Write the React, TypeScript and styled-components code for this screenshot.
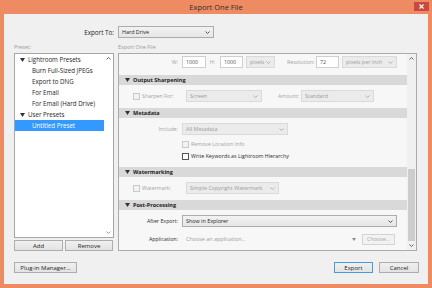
import React from 'react'
import styled, { createGlobalStyle } from 'styled-components'

const GlobalStyle = createGlobalStyle`
  html, body {
    margin: 0;
    padding: 0;
  }
  body {
    width: 432px;
    height: 288px;
    overflow: hidden;
    font-family: 'Open Sans', 'Noto Sans', sans-serif;
    -webkit-font-smoothing: antialiased;
  }
`

const Window = styled.div`
  width: 432px;
  height: 288px;
  box-sizing: border-box;
  background: #ee8b62;
  padding: 0 4px 4px 4px;
  display: flex;
  flex-direction: column;
`

const TitleBar = styled.div`
  height: 14px;
  flex-shrink: 0;
  display: grid;
  grid-template-columns: 1fr auto 1fr;
  align-items: start;
`

const Title = styled.div`
  grid-column: 2;
  font-size: 7.5px;
  line-height: 14px;
  color: #2d2d2d;
`

const CloseButton = styled.div`
  grid-column: 3;
  justify-self: end;
  width: 15px;
  height: 9px;
  margin-top: 2px;
  margin-right: -1px;
  background: #c9493f;
  display: flex;
  align-items: center;
  justify-content: center;
`

const Body = styled.div`
  flex: 1;
  min-height: 0;
  background: #f0f0f0;
  padding: 12px 9px 11px 10px;
  display: flex;
  flex-direction: column;
`

const ExportToRow = styled.div`
  height: 12px;
  display: flex;
  align-items: center;
  padding-left: 70px;
`

const ExportToLabel = styled.div`
  width: 30px;
  margin-right: 4px;
  text-align: right;
  font-size: 6.3px;
  color: #1e1e1e;
  white-space: nowrap;
`

const Columns = styled.div`
  flex: 1;
  min-height: 0;
  margin-top: 4px;
  margin-right: 2px;
  display: grid;
  grid-template-columns: 100px 1fr;
  column-gap: 4px;
`

const Column = styled.div`
  display: flex;
  flex-direction: column;
  min-height: 0;
`

const ColumnTitle = styled.div`
  height: 11px;
  line-height: 11px;
  font-size: 5.3px;
  color: #9b9b9b;
`

const PresetList = styled.div`
  flex: 1;
  min-height: 0;
  border: 1px solid #a6a6a6;
  background: #ffffff;
  display: flex;
`

const TreeItems = styled.div`
  flex: 1;
  display: flex;
  flex-direction: column;
`

const TreeRow = styled.div<{ $level: number; $selected?: boolean }>`
  height: 11px;
  display: flex;
  align-items: center;
  gap: 3px;
  padding-left: ${({ $level }) => ($level === 0 ? 5 : 17)}px;
  background: ${({ $selected }) => ($selected ? '#3399ff' : 'transparent')};
  color: ${({ $selected }) => ($selected ? '#ffffff' : '#1e1e1e')};
  font-size: 6.2px;
  white-space: nowrap;
`

const ListScrollBar = styled.div`
  width: 9px;
  display: flex;
  flex-direction: column;
  justify-content: space-between;
  align-items: center;
  padding: 3px 0;
`

const ListButtons = styled.div`
  height: 11px;
  margin-top: 2px;
  display: grid;
  grid-template-columns: 49px 48px;
  column-gap: 2px;
`

const Button = styled.div<{ $w?: number; $ml?: number; $default?: boolean; $disabled?: boolean }>`
  box-sizing: border-box;
  height: 11px;
  width: ${({ $w }) => ($w ? `${$w}px` : 'auto')};
  margin-left: ${({ $ml }) => $ml ?? 0}px;
  border: 1px solid ${({ $default }) => ($default ? '#3c8fe0' : '#adadad')};
  background: ${({ $disabled }) => ($disabled ? '#f2f2f2' : 'linear-gradient(#f0f0f0, #e3e3e3)')};
  border-color: ${({ $default, $disabled }) => ($default ? '#4a97e2' : $disabled ? '#d4d4d4' : '#adadad')};
  display: flex;
  align-items: center;
  justify-content: center;
  font-size: ${({ $disabled }) => ($disabled ? 5.4 : 6)}px;
  color: ${({ $disabled }) => ($disabled ? '#a8a8a8' : '#1e1e1e')};
  white-space: nowrap;
`

const SettingsPanel = styled.div`
  flex: 1;
  min-height: 0;
  border: 1px solid #ababab;
  background: #f7f7f7;
  display: flex;
`

const PanelContent = styled.div`
  flex: 1;
  display: flex;
  flex-direction: column;
  overflow: hidden;
`

const PanelScrollBar = styled.div`
  width: 9px;
  background: #f0f0f0;
  display: flex;
  flex-direction: column;
`

const ScrollArrow = styled.div`
  height: 9px;
  display: flex;
  align-items: center;
  justify-content: center;
`

const ScrollTrack = styled.div`
  flex: 1;
  display: flex;
  flex-direction: column;
  justify-content: flex-end;
`

const ScrollThumb = styled.div<{ $h: number }>`
  height: ${({ $h }) => $h}px;
  background: #cdcdcd;
  margin: 0 1px;
`

const SectionHeader = styled.div`
  height: 10px;
  flex-shrink: 0;
  background: #d9d9d9;
  display: flex;
  align-items: center;
  gap: 3px;
  padding-left: 6px;
  font-size: 5.5px;
  font-weight: 700;
  color: #222;
`

const SectionBody = styled.div<{ $pt: number; $pb: number }>`
  display: flex;
  flex-direction: column;
  padding: ${({ $pt, $pb }) => `${$pt}px 0 ${$pb}px`};
`

const FormRow = styled.div<{ $mt?: number }>`
  height: 12px;
  flex-shrink: 0;
  display: flex;
  align-items: center;
  margin-top: ${({ $mt }) => $mt ?? 0}px;
`

const RowLabel = styled.div<{ $dim?: boolean }>`
  width: 59px;
  margin-right: 4px;
  text-align: right;
  font-size: 5.3px;
  color: ${({ $dim }) => ($dim ? '#a3a3a3' : '#2a2a2a')};
  white-space: nowrap;
`

const CheckLabel = styled.label<{ $dim?: boolean }>`
  width: 49px;
  margin-right: 4px;
  padding-left: 14px;
  display: flex;
  align-items: center;
  gap: 2px;
  font-size: 5.3px;
  color: ${({ $dim }) => ($dim ? '#a3a3a3' : '#2a2a2a')};
  white-space: nowrap;
`

const CheckRow = styled.label<{ $dim?: boolean }>`
  height: 12px;
  padding-left: 63px;
  display: flex;
  align-items: center;
  gap: 2px;
  font-size: 5.3px;
  color: ${({ $dim }) => ($dim ? '#a3a3a3' : '#2a2a2a')};
  white-space: nowrap;
`

const CheckBox = styled.span<{ $dim?: boolean }>`
  box-sizing: border-box;
  width: 7px;
  height: 7px;
  flex-shrink: 0;
  border: 1px solid ${({ $dim }) => ($dim ? '#c9c9c9' : '#555')};
  background: ${({ $dim }) => ($dim ? '#f2f2f2' : '#fff')};
`

const InlineLabel = styled.div<{ $w: number; $ml: number; $mr: number }>`
  width: ${({ $w }) => $w}px;
  margin: ${({ $ml, $mr }) => `0 ${$mr}px 0 ${$ml}px`};
  text-align: right;
  font-size: 5.3px;
  color: #a3a3a3;
  white-space: nowrap;
`

const TextInput = styled.div<{ $w: number; $ml?: number }>`
  box-sizing: border-box;
  width: ${({ $w }) => $w}px;
  height: 12px;
  margin-left: ${({ $ml }) => $ml ?? 0}px;
  border: 1px solid #cfcfcf;
  background: #fff;
  padding-left: 3px;
  display: flex;
  align-items: center;
  font-size: 5.3px;
  color: #555;
`

const SelectBox = styled.div<{ $w: number; $ml?: number; $dim?: boolean; $flat?: boolean }>`
  box-sizing: border-box;
  width: ${({ $w }) => $w}px;
  height: 12px;
  margin-left: ${({ $ml }) => $ml ?? 0}px;
  border: 1px solid ${({ $dim, $flat }) => ($flat ? 'transparent' : $dim ? '#dadada' : '#acacac')};
  background: ${({ $dim, $flat }) => ($flat ? 'transparent' : $dim ? '#ebebeb' : 'linear-gradient(#f2f2f2, #e6e6e6)')};
  padding: 0 3px;
  display: flex;
  align-items: center;
  justify-content: space-between;
  font-size: 5.4px;
  color: ${({ $dim }) => ($dim ? '#9c9c9c' : '#1e1e1e')};
  white-space: nowrap;
`

const Footer = styled.div`
  height: 11px;
  margin-top: 11px;
  display: flex;
  align-items: center;
  justify-content: space-between;
`

const FooterActions = styled.div`
  display: flex;
  gap: 6px;
`

function Chevron({ color = '#6d6d6d', filled = false }: { color?: string; filled?: boolean }) {
  if (filled) {
    return (
      <svg width="4" height="3" viewBox="0 0 4 3">
        <polygon points="0,0 4,0 2,3" fill={color} />
      </svg>
    )
  }
  return (
    <svg width="5" height="3" viewBox="0 0 5 3">
      <polyline points="0.5,0.5 2.5,2.5 4.5,0.5" fill="none" stroke={color} strokeWidth="1" />
    </svg>
  )
}

function UpChevron() {
  return (
    <svg width="5" height="3" viewBox="0 0 5 3">
      <polyline points="0.5,2.5 2.5,0.5 4.5,2.5" fill="none" stroke="#606060" strokeWidth="1" />
    </svg>
  )
}

function Twisty({ color = '#333' }: { color?: string }) {
  return (
    <svg width="5" height="4" viewBox="0 0 5 4">
      <polygon points="0,0 5,0 2.5,4" fill={color} />
    </svg>
  )
}

function Select({
  value,
  w,
  ml,
  dim,
  flat,
}: {
  value: string
  w: number
  ml?: number
  dim?: boolean
  flat?: boolean
}) {
  return (
    <SelectBox $w={w} $ml={ml} $dim={dim} $flat={flat}>
      <span>{value}</span>
      {flat ? <Chevron filled color="#8a8a8a" /> : <Chevron color={dim ? '#b0b0b0' : '#555'} />}
    </SelectBox>
  )
}

function Section({ title, children }: { title: string; children: React.ReactNode }) {
  return (
    <>
      <SectionHeader>
        <Twisty />
        {title}
      </SectionHeader>
      {children}
    </>
  )
}

const presets = [
  { label: 'Lightroom Presets', level: 0 },
  { label: 'Burn Full-Sized JPEGs', level: 1 },
  { label: 'Export to DNG', level: 1 },
  { label: 'For Email', level: 1 },
  { label: 'For Email (Hard Drive)', level: 1 },
  { label: 'User Presets', level: 0 },
  { label: 'Untitled Preset', level: 1, selected: true },
]

export default function App() {
  return (
    <>
      <GlobalStyle />
      <Window>
        <TitleBar>
          <Title>Export One File</Title>
          <CloseButton>
            <svg width="5" height="5" viewBox="0 0 5 5">
              <path d="M0.5 0.5 L4.5 4.5 M4.5 0.5 L0.5 4.5" stroke="#fff" strokeWidth="1.1" />
            </svg>
          </CloseButton>
        </TitleBar>
        <Body>
          <ExportToRow>
            <ExportToLabel>Export To:</ExportToLabel>
            <Select value="Hard Drive" w={96} />
          </ExportToRow>

          <Columns>
            <Column>
              <ColumnTitle>Preset:</ColumnTitle>
              <PresetList>
                <TreeItems>
                  {presets.map((p) => (
                    <TreeRow key={p.label} $level={p.level} $selected={p.selected}>
                      {p.level === 0 && <Twisty />}
                      {p.label}
                    </TreeRow>
                  ))}
                </TreeItems>
                <ListScrollBar>
                  <UpChevron />
                  <Chevron color="#9a9a9a" />
                </ListScrollBar>
              </PresetList>
              <ListButtons>
                <Button>Add</Button>
                <Button>Remove</Button>
              </ListButtons>
            </Column>

            <Column>
              <ColumnTitle>Export One File</ColumnTitle>
              <SettingsPanel>
                <PanelContent>
                  <SectionBody $pt={2} $pb={7}>
                    <FormRow>
                      <RowLabel $dim>W:</RowLabel>
                      <TextInput $w={24}>1000</TextInput>
                      <InlineLabel $w={6} $ml={3} $mr={5}>H:</InlineLabel>
                      <TextInput $w={23}>1000</TextInput>
                      <Select value="pixels" w={29} ml={3} dim />
                      <InlineLabel $w={26} $ml={12} $mr={3}>Resolution:</InlineLabel>
                      <TextInput $w={23}>72</TextInput>
                      <Select value="pixels per inch" w={55} ml={3} dim />
                    </FormRow>
                  </SectionBody>

                  <Section title="Output Sharpening">
                    <SectionBody $pt={5} $pb={6}>
                      <FormRow>
                        <CheckLabel $dim>
                          <CheckBox $dim />
                          Sharpen For:
                        </CheckLabel>
                        <Select value="Screen" w={76} dim />
                        <InlineLabel $w={20} $ml={16} $mr={3}>Amount:</InlineLabel>
                        <Select value="Standard" w={73} dim />
                      </FormRow>
                    </SectionBody>
                  </Section>

                  <Section title="Metadata">
                    <SectionBody $pt={5} $pb={5}>
                      <FormRow>
                        <RowLabel $dim>Include:</RowLabel>
                        <Select value="All Metadata" w={106} dim />
                      </FormRow>
                      <FormRow $mt={3}>
                        <CheckRow $dim>
                          <CheckBox $dim />
                          Remove Location Info
                        </CheckRow>
                      </FormRow>
                      <FormRow>
                        <CheckRow>
                          <CheckBox />
                          Write Keywords as Lightroom Hierarchy
                        </CheckRow>
                      </FormRow>
                    </SectionBody>
                  </Section>

                  <Section title="Watermarking">
                    <SectionBody $pt={5} $pb={6}>
                      <FormRow>
                        <CheckLabel $dim>
                          <CheckBox $dim />
                          Watermark:
                        </CheckLabel>
                        <Select value="Simple Copyright Watermark" w={93} dim />
                      </FormRow>
                    </SectionBody>
                  </Section>

                  <Section title="Post-Processing">
                    <SectionBody $pt={5} $pb={0}>
                      <FormRow>
                        <RowLabel>After Export:</RowLabel>
                        <Select value="Show in Explorer" w={215} />
                      </FormRow>
                      <FormRow $mt={6}>
                        <RowLabel>Application:</RowLabel>
                        <Select value="Choose an application..." w={178} dim flat />
                        <Button $w={33} $ml={2} $disabled>
                          Choose...
                        </Button>
                      </FormRow>
                    </SectionBody>
                  </Section>
                </PanelContent>
                <PanelScrollBar>
                  <ScrollArrow>
                    <UpChevron />
                  </ScrollArrow>
                  <ScrollTrack>
                    <ScrollThumb $h={72} />
                  </ScrollTrack>
                  <ScrollArrow>
                    <Chevron color="#606060" />
                  </ScrollArrow>
                </PanelScrollBar>
              </SettingsPanel>
            </Column>
          </Columns>

          <Footer>
            <Button $w={63}>Plug-in Manager...</Button>
            <FooterActions>
              <Button $w={39} $default>
                Export
              </Button>
              <Button $w={40}>Cancel</Button>
            </FooterActions>
          </Footer>
        </Body>
      </Window>
    </>
  )
}
